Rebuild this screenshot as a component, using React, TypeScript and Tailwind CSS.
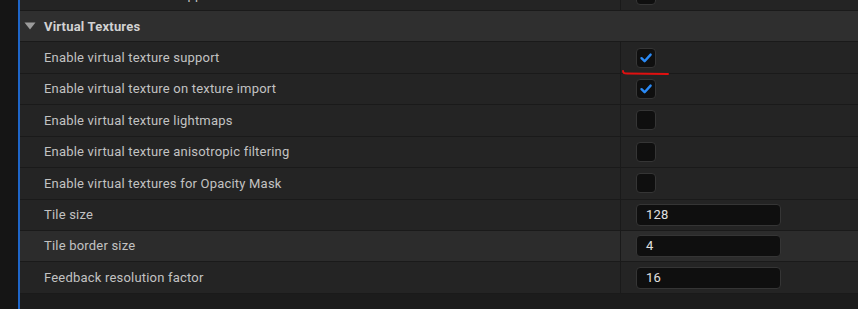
import React from "react";

const Check = ({ checked }: { checked: boolean }) => (
  <div className="w-[20px] h-[20px] rounded-[4px] bg-[#0f0f0f] border border-[#353535] flex items-center justify-center">
    {checked && (
      <svg width="14" height="14" viewBox="0 0 14 14">
        <path d="M2.5 7.2 L5.6 10.2 L11.6 3.6" fill="none" stroke="#2a8af6" strokeWidth="2.4" strokeLinecap="round" strokeLinejoin="round" />
      </svg>
    )}
  </div>
);

const Field = ({ value }: { value: string }) => (
  <div className="w-[145px] h-[22px] rounded-[4px] bg-[#0f0f0f] border border-[#353535] flex items-center pl-[9px] text-[13px] text-[#e0e0e0]">
    {value}
  </div>
);

type RowProps = { label: string; children?: React.ReactNode; hl?: boolean };

const Row = ({ label, children, hl }: RowProps) => (
  <div className={`h-[31.43px] flex border-b border-[#1a1a1a] ${hl ? "bg-[#2c2c2c]" : "bg-[#242424]"}`}>
    <div className="w-[601px] shrink-0 flex items-center pl-[24px] text-[13px] text-[#c2c2c2] border-r border-[#1a1a1a]">
      {label}
    </div>
    <div className="flex-1 flex items-center pl-[15px]">{children}</div>
  </div>
);

export default function App() {
  return (
    <div className="w-[858px] h-[309px] bg-[#1c1c1c] flex overflow-hidden font-['Roboto',sans-serif] tracking-[0.2px]">
      <div className="w-[18px] shrink-0 bg-[#151515]" />
      <div className="w-[2px] shrink-0 bg-[#1f66c8]" />
      <div className="flex-1 flex flex-col relative">
        <div className="-mt-[20px]">
          <Row label="Enable virtual texture support for mobile">
            <Check checked={false} />
          </Row>
        </div>
        <div className="h-[31px] shrink-0 flex items-center bg-[#2f2f2f] border-b border-[#1a1a1a] pl-[4px]">
          <svg width="12" height="8" viewBox="0 0 12 8" className="mr-[8px]">
            <path d="M0.5 0.5 L11.5 0.5 L6 7.5 Z" fill="#9c9c9c" />
          </svg>
          <span className="text-[13px] font-bold text-[#d2d2d2]">Virtual Textures</span>
        </div>
        <Row label="Enable virtual texture support">
          <Check checked />
        </Row>
        <Row label="Enable virtual texture on texture import">
          <Check checked />
        </Row>
        <Row label="Enable virtual texture lightmaps">
          <Check checked={false} />
        </Row>
        <Row label="Enable virtual texture anisotropic filtering">
          <Check checked={false} />
        </Row>
        <Row label="Enable virtual textures for Opacity Mask">
          <Check checked={false} />
        </Row>
        <Row label="Tile size">
          <Field value="128" />
        </Row>
        <Row label="Tile border size" hl>
          <Field value="4" />
        </Row>
        <Row label="Feedback resolution factor">
          <Field value="16" />
        </Row>
        <svg className="absolute left-[601px] top-[69px]" width="50" height="8" viewBox="0 0 50 8">
          <path d="M2 2 Q2 4.5 6 4.5 L47 5" fill="none" stroke="#e01010" strokeWidth="2" strokeLinecap="round" />
        </svg>
      </div>
    </div>
  );
}
